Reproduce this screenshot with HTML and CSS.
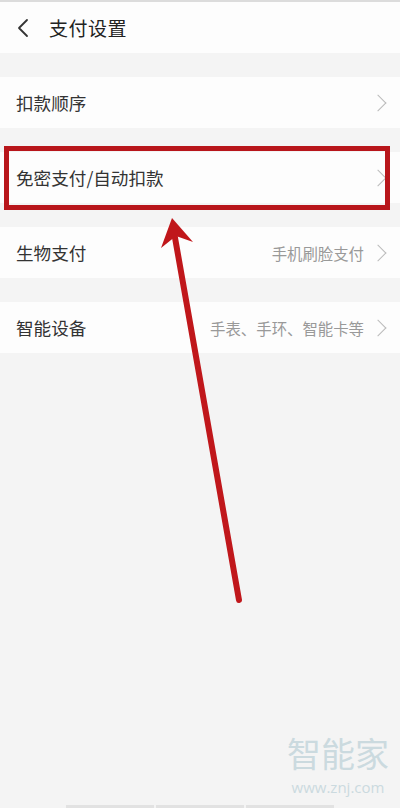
FILE: index.html
```html
<!DOCTYPE html>
<html lang="zh">
<head>
<meta charset="utf-8">
<link rel="stylesheet" href="styles.css">
</head>
<body>
<div class="page">
  <header class="topbar">
    <svg class="back" width="14" height="20" viewBox="0 0 14 20"><path d="M11 2 L3 10 L11 18" fill="none" stroke="#333" stroke-width="1.8" stroke-linecap="round" stroke-linejoin="round"/></svg>
    <span class="title">支付设置</span>
  </header>
  <div class="list">
    <div class="row"><span class="label">扣款顺序</span><span class="right"><span class="chev"></span></span></div>
    <div class="row"><span class="label">免密支付/自动扣款</span><span class="right"><span class="chev"></span></span></div>
    <div class="row"><span class="label">生物支付</span><span class="right"><span class="hint">手机刷脸支付</span><span class="chev"></span></span></div>
    <div class="row"><span class="label">智能设备</span><span class="right"><span class="hint">手表、手环、智能卡等</span><span class="chev"></span></span></div>
  </div>
  <div class="highlight"></div>
  <svg class="arrow" width="400" height="808" viewBox="0 0 400 808">
    <line x1="239" y1="600" x2="174" y2="232" stroke="#c0171b" stroke-width="6" stroke-linecap="round"/>
    <polygon points="172,218 161,248 176,236 193,242" fill="#c0171b"/>
  </svg>
  <div class="watermark">
    <div class="wm-big">智能家</div>
    <div class="wm-small">www.znj.com</div>
  </div>
  <div class="navbar"><span></span><span></span><span></span></div>
</div>
</body>
</html>
```
FILE: styles.css
```css
html, body {
  margin: 0;
  padding: 0;
}
body {
  background: #f4f4f4;
  font-family: "Noto Sans CJK SC", "Noto Sans", sans-serif;
}
.page {
  position: relative;
  width: 400px;
  height: 808px;
  overflow: hidden;
}
.topbar {
  height: 51px;
  border-top: 2px solid #dcdcdc;
  background: #fdfdfd;
  display: flex;
  align-items: center;
  padding-left: 16px;
  gap: 19px;
}
.back {
  display: block;
}
.title {
  font-size: 19px;
  color: #222;
  letter-spacing: 0.5px;
}
.list {
  display: flex;
  flex-direction: column;
  gap: 24px;
  padding-top: 24px;
}
.row {
  height: 51px;
  background: #fdfdfd;
  display: flex;
  align-items: center;
  justify-content: space-between;
  padding: 0 16px;
}
.label {
  font-size: 17.6px;
  color: #333;
}
.right {
  display: flex;
  align-items: center;
  gap: 8px;
}
.hint {
  font-size: 15.4px;
  color: #999;
}
.chev {
  width: 11px;
  height: 11px;
  border-top: 1.5px solid #bbb;
  border-right: 1.5px solid #bbb;
  transform: rotate(45deg);
  margin-right: 0;
}
.highlight {
  position: absolute;
  left: 4px;
  top: 146px;
  width: 376px;
  height: 54px;
  border: 5px solid #b8161b;
}
.arrow {
  position: absolute;
  left: 0;
  top: 0;
}
.watermark {
  position: absolute;
  right: 11px;
  top: 732px;
  display: flex;
  flex-direction: column;
  align-items: center;
  gap: 4px;
  color: #cbdadf;
}
.wm-big {
  font-size: 34px;
  line-height: 42px;
}
.wm-small {
  font-family: "Open Sans", sans-serif;
  font-size: 15px;
  line-height: 18px;
}
.navbar {
  position: absolute;
  left: 66px;
  bottom: 0;
  height: 3px;
  display: flex;
  gap: 2px;
}
.navbar span {
  width: 88px;
  height: 3px;
  background: #e2e2e2;
}
```
